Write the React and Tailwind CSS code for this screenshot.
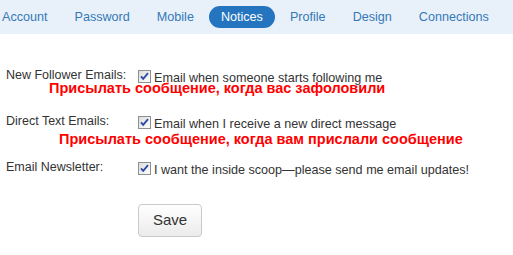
const tabs = ["Account", "Password", "Mobile", "Notices", "Profile", "Design", "Connections"];

const CheckBox = ({ className }) => (
  <svg className={className} width="13" height="13" viewBox="0 0 13 13">
    <defs>
      <linearGradient id="cbg" x1="0" y1="0" x2="1" y2="1">
        <stop offset="0" stopColor="#dcdcd6" />
        <stop offset="1" stopColor="#ffffff" />
      </linearGradient>
    </defs>
    <rect x="0.5" y="0.5" width="12" height="12" fill="url(#cbg)" stroke="#8c8f94" />
    <path d="M3 6.3 L5.2 8.8 L10 3.2" fill="none" stroke="#2a46a8" strokeWidth="1.8" />
  </svg>
);

const Row = ({ label, text, note, noteShift, noteTop, className }) => (
  <div className={`flex pl-[6px] ${className}`}>
    <div className="w-[132px] shrink-0 text-[12.5px] leading-[14px] text-[#333]">{label}</div>
    <div>
      <div className="flex">
        <CheckBox className="mt-[2px] shrink-0" />
        <span className="ml-[3px] mt-[2px] whitespace-nowrap text-[12.6px] leading-[16px] text-[#333]">
          {text}
        </span>
      </div>
      {note && (
        <p
          className={`whitespace-nowrap text-[14.5px] font-bold leading-[16px] text-[#ff0000] ${noteShift} ${noteTop}`}
        >
          {note}
        </p>
      )}
    </div>
  </div>
);

export default function App() {
  return (
    <div className="h-[255px] w-[513px] overflow-hidden bg-white font-['Liberation_Sans',Arial,sans-serif]">
      <div className="h-[34px] bg-[#e8f1f9] pt-[6px]">
        <div className="ml-[-10px] flex gap-[3px]">
          {tabs.map((t) => (
            <div
              key={t}
              className={
                t === "Notices"
                  ? "h-[22px] rounded-full bg-[#2574bf] px-[12px] text-[12.6px] leading-[22px] text-white"
                  : "h-[22px] px-[12px] text-[12.6px] leading-[22px] text-[#3678b8]"
              }
            >
              {t}
            </div>
          ))}
        </div>
      </div>

      <Row
        className="mt-[34px]"
        label="New Follower Emails:"
        text="Email when someone starts following me"
        note="Присылать сообщение, когда вас зафоловили"
        noteShift="ml-[-89px]"
        noteTop="mt-[-6px]"
      />
      <Row
        className="mt-[18px]"
        label="Direct Text Emails:"
        text="Email when I receive a new direct message"
        note="Присылать сообщение, когда вам прислали сообщение"
        noteShift="ml-[-79px]"
        noteTop="mt-[-1px]"
      />
      <Row
        className="mt-[13px]"
        label="Email Newsletter:"
        text="I want the inside scoop—please send me email updates!"
      />

      <button className="ml-[138px] mt-[26px] h-[33px] w-[64px] rounded-[4px] border border-[#cacaca] bg-gradient-to-b from-white to-[#ebebeb] text-[15px] text-[#333]">
        Save
      </button>
    </div>
  );
}
